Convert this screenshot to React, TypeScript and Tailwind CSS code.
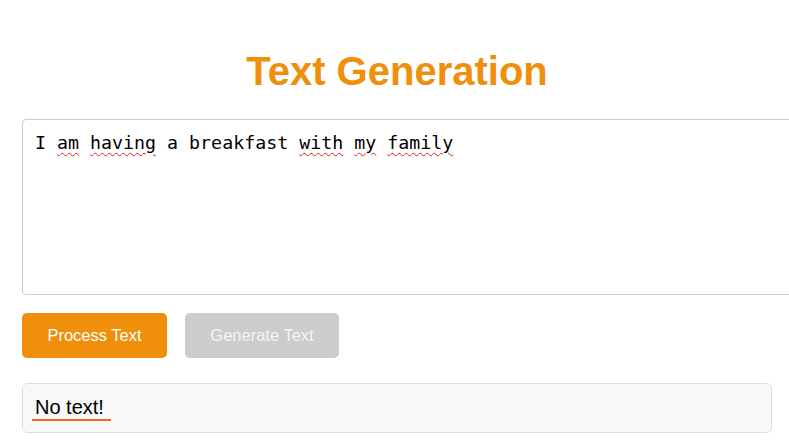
const mono = { fontFamily: '"DejaVu Sans Mono", "Liberation Mono", monospace' };

function Wavy({ children }: { children: string }) {
  return <span className="underline decoration-wavy decoration-[#e02020] decoration-1 underline-offset-[3px]">{children}</span>;
}

export default function App() {
  return (
    <div className="w-full overflow-hidden bg-white font-['Liberation_Sans',Arial,sans-serif]" style={{ minHeight: 440 }}>
      <div className="mx-[22px] w-[750px]">
        <h1 className="pt-[44px] pb-[21px] text-center text-[40px] font-bold leading-[54px] text-[#ef8f0b]">
          Text Generation
        </h1>
        <div
          className="h-[176px] w-[776px] rounded-[4px] border border-[#cccccc] px-[12px] pt-[11px] text-[18.3px] leading-[24px] text-black"
          style={mono}
        >
          I <Wavy>am</Wavy> <Wavy>having</Wavy> a breakfast <Wavy>with</Wavy> <Wavy>my</Wavy> <Wavy>family</Wavy>
        </div>
        <div className="mt-[18px] flex gap-[18px]">
          <button className="h-[45px] w-[145px] rounded-[5px] bg-[#ef8f0b] text-[16.5px] text-white">Process Text</button>
          <button className="h-[45px] w-[154px] rounded-[5px] bg-[#cccccc] text-[16.5px] text-[#f4f4f4]">Generate Text</button>
        </div>
        <div className="mt-[25px] flex h-[50px] items-center rounded-[5px] border border-[#dddddd] bg-[#f8f8f8] px-[9px]">
          <span className="border-b-2 border-[#f5652a] pl-[3px] pr-[7px] text-[20px] leading-[24px] text-black">No text!</span>
        </div>
      </div>
    </div>
  );
}
